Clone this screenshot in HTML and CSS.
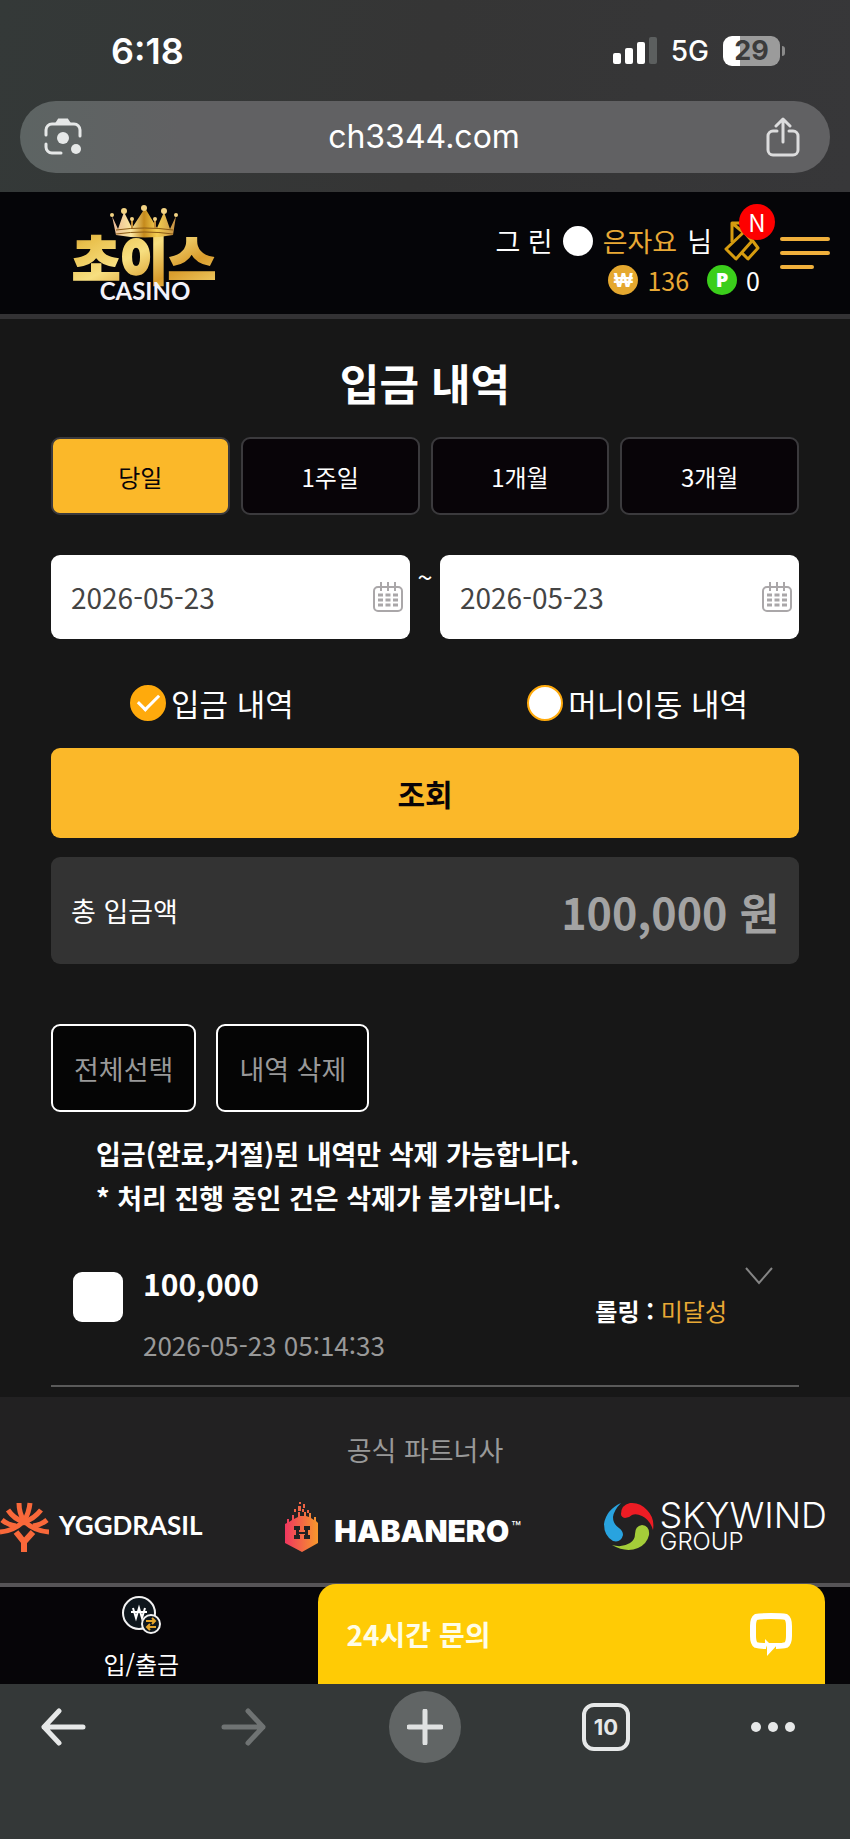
FILE: index.html
```html
<!DOCTYPE html>
<html lang="ko">
<head>
    <meta charset="UTF-8">
    <meta name="viewport" content="width=device-width, initial-scale=1.0">
    <title>입금 내역</title>
    <link rel="stylesheet" href="styles.css">
</head>
<body>
    <div class="browser-top">
        <div class="status-bar">
            <span class="time">6:18</span>
            <div class="status-icons">
                <svg class="signal" width="44" height="28" viewBox="0 0 44 28">
                    <rect x="0" y="16" width="8" height="11" rx="2" fill="#fff"/>
                    <rect x="12" y="11" width="8" height="16" rx="2" fill="#fff"/>
                    <rect x="24" y="5" width="8" height="22" rx="2" fill="#fff"/>
                    <rect x="36" y="0" width="8" height="27" rx="2" fill="#5c5f5f"/>
                </svg>
                <span class="network">5G</span>
                <div class="battery"><span class="battery-body">29</span><span class="battery-tip"></span></div>
            </div>
        </div>
        <div class="url-bar">
            <button class="icon-btn" aria-label="Lens">
                <svg width="38" height="38" viewBox="0 0 38 38" fill="none" stroke="#e6e8e8" stroke-width="3" stroke-linecap="round">
                    <path d="M2 17v-5a6 6 0 0 1 6-6h22a6 6 0 0 1 6 6v6M2 26v3a6 6 0 0 0 6 6h9"/>
                    <path d="M13 5l2-3h8l2 3z" fill="#e6e8e8"/>
                    <circle cx="19" cy="20" r="6" fill="#e6e8e8" stroke="none"/>
                    <circle cx="32" cy="31" r="5" fill="#e6e8e8" stroke="none"/>
                </svg>
            </button>
            <span class="url">ch3344.com</span>
            <button class="icon-btn" aria-label="Share">
                <svg width="34" height="40" viewBox="0 0 34 40" fill="none" stroke="#dcdcdd" stroke-width="3" stroke-linecap="round" stroke-linejoin="round">
                    <path d="M11 14H7a5 5 0 0 0-5 5v14a5 5 0 0 0 5 5h20a5 5 0 0 0 5-5V19a5 5 0 0 0-5-5h-4"/>
                    <path d="M17 25V3M10 9l7-7 7 7"/>
                </svg>
            </button>
        </div>
    </div>

    <header class="site-header">
        <a href="#" class="logo">
            <svg width="148" height="108" viewBox="0 -4 148 108">
                <defs>
                    <linearGradient id="gold" x1="0" y1="0" x2="1" y2="1">
                        <stop offset="0" stop-color="#b8802a"/>
                        <stop offset=".2" stop-color="#e9c04c"/>
                        <stop offset=".45" stop-color="#f7df80"/>
                        <stop offset=".7" stop-color="#d99c2c"/>
                        <stop offset="1" stop-color="#f6d873"/>
                    </linearGradient>
                    <linearGradient id="crown" x1="0" y1="0" x2="1" y2="0">
                        <stop offset="0" stop-color="#e8b795"/>
                        <stop offset=".3" stop-color="#fbe6a0"/>
                        <stop offset=".5" stop-color="#c58a1c"/>
                        <stop offset=".7" stop-color="#f5cf50"/>
                        <stop offset="1" stop-color="#c58f45"/>
                    </linearGradient>
                </defs>
                <text class="logo-name" x="73" y="77" text-anchor="middle" fill="url(#gold)" stroke="url(#gold)" stroke-width="2">초이스</text>
                <path fill="url(#crown)" d="M41 13L47 26 53 9 61 25 74 5 86 25 93 9 99 26 105 13 102 32Q74 37 45 32z"/>
                <path fill="none" stroke="#8a5a14" stroke-width="1" d="M45 27Q74 23 102 27M45 31Q74 27 102 31"/>
                <path fill="none" stroke="#c08a35" stroke-width="2" d="M61 17v8M84 17v8"/>
                <g fill="#f3d384">
                    <circle cx="41" cy="12" r="2"/>
                    <circle cx="53" cy="8" r="3"/>
                    <circle cx="73" cy="5" r="3"/>
                    <circle cx="93" cy="8" r="3"/>
                    <circle cx="105" cy="12" r="2"/>
                    <circle cx="61" cy="16" r="2"/>
                    <circle cx="84" cy="16" r="2"/>
                </g>
                <text class="logo-sub" x="74" y="97" text-anchor="middle" fill="#f2f2fa">CASINO</text>
            </svg>
        </a>
        <div class="user">
            <div class="user-row">
                <span>그 린</span><span class="level-dot"></span><span class="gold">은자요</span><span>님</span>
                <a href="#" class="message" aria-label="쪽지">
                    <svg width="36" height="42" viewBox="0 0 36 42" fill="none" stroke="#d69c10" stroke-width="3" stroke-linejoin="round">
                        <path d="M8 22V3h9l12 16M8 3l12 10"/>
                        <path d="M2 29l18-17 8 9-16 18z"/>
                        <path d="M28 20l6 8-10 11-6-6"/>
                    </svg>
                    <span class="badge">N</span>
                </a>
            </div>
            <div class="money-row">
                <span class="coin coin-won">₩</span><span class="money gold">136</span>
                <span class="coin coin-point">P</span><span class="money">0</span>
            </div>
        </div>
        <button class="menu-btn" aria-label="메뉴"><span></span><span></span><span></span></button>
    </header>

    <main class="content">
        <h1>입금 내역</h1>

        <div class="tabs">
            <button class="tab active">당일</button>
            <button class="tab">1주일</button>
            <button class="tab">1개월</button>
            <button class="tab">3개월</button>
        </div>

        <div class="dates">
            <label class="date-box">
                <input type="text" value="2026-05-23" aria-label="시작일">
                <svg width="30" height="30" viewBox="0 0 30 30" fill="none" stroke="#aaa7a9" stroke-width="2">
                    <rect x="1" y="5" width="28" height="24" rx="4"/>
                    <path d="M8 0v9M15 0v9M22 0v9"/>
                    <path d="M5 13h20M5 18h20M5 23h20" stroke-width="3" stroke-dasharray="5 2.5"/>
                </svg>
            </label>
            <span class="tilde">~</span>
            <label class="date-box">
                <input type="text" value="2026-05-23" aria-label="종료일">
                <svg width="30" height="30" viewBox="0 0 30 30" fill="none" stroke="#aaa7a9" stroke-width="2">
                    <rect x="1" y="5" width="28" height="24" rx="4"/>
                    <path d="M8 0v9M15 0v9M22 0v9"/>
                    <path d="M5 13h20M5 18h20M5 23h20" stroke-width="3" stroke-dasharray="5 2.5"/>
                </svg>
            </label>
        </div>

        <div class="types">
            <label class="type"><input type="radio" name="type" checked>입금 내역</label>
            <label class="type"><input type="radio" name="type">머니이동 내역</label>
        </div>

        <button class="search-btn">조회</button>

        <div class="total">
            <span class="total-label">총 입금액</span>
            <strong class="total-amount">100,000 원</strong>
        </div>

        <div class="actions">
            <button class="action">전체선택</button>
            <button class="action">내역 삭제</button>
        </div>

        <p class="notice">입금(완료,거절)된 내역만 삭제 가능합니다.<br>* 처리 진행 중인 건은 삭제가 불가합니다.</p>

        <div class="record">
            <input type="checkbox" id="record-1" class="record-check">
            <label for="record-1" class="record-info">
                <strong class="record-amount">100,000</strong>
                <span class="record-date">2026-05-23 05:14:33</span>
            </label>
            <div class="rolling"><strong>롤링 :</strong> <span class="gold">미달성</span></div>
            <svg class="chevron" width="28" height="18" viewBox="0 0 28 18" fill="none" stroke="#858585" stroke-width="2">
                <path d="M1 1l13 15L27 1"/>
            </svg>
        </div>
    </main>

    <footer class="partners">
        <h2>공식 파트너사</h2>
        <div class="partner-list">
            <div class="partner yggdrasil">
                <svg width="49" height="50" viewBox="0 0 49 50" fill="none" stroke="#f9683a" stroke-width="5">
                    <path d="M24 50V40L16 30M24 40l9-10" stroke-width="6"/>
                    <path d="M0 30q14-1 24-11 10 10 25 11"/>
                    <path d="M2 18q6 5 14 6M47 18q-6 5-14 6"/>
                    <path d="M8 8q6 9 16 12 10-3 17-12"/>
                    <path d="M19 1q0 10 5 18 5-8 6-18"/>
                </svg>
                <span>YGGDRASIL</span>
            </div>
            <div class="partner habanero">
                <svg width="33" height="50" viewBox="0 0 33 50">
                    <defs>
                        <linearGradient id="fire" x1="0" y1="0" x2="1" y2="0">
                            <stop offset="0" stop-color="#f0365f"/>
                            <stop offset="1" stop-color="#f7982c"/>
                        </linearGradient>
                    </defs>
                    <path fill="url(#fire)" d="M0 22l2-1v-4h2v3l3-2v-5h2v4l4-2v-5h2v4h4v-4h2v4l3 1v-4h2v5l3 2v-3h2v4l2 2v20l-16 9L0 41z"/>
                    <path fill="#ee6444" d="M13 4h3v5h-3zM14 0h2v2h-2zM18 2h2v4h-2zM17 7h2v3h-2zM22 8h2v3h-2zM9 7h2v3H9z"/>
                    <path fill="#222" d="M9 24h6v4h-1v2h6v-2h-1v-4h6v4h-2v5h2v4h-6v-4h1v-1h-6v1h1v4H9v-4h2v-5H9z"/>
                </svg>
                <span>HABANERO</span><sup>™</sup>
            </div>
            <div class="partner skywind">
                <svg width="50" height="50" viewBox="0 0 50 50">
                    <path fill="#29a3df" d="M17 1Q2 8 0 22q0 12 9 17 8 2 10-6 0-4-4-7-6-4-6-11 1-7 8-14z"/>
                    <path fill="#ed1c24" d="M17 12q0-9 9-11 10-1 17 7 8 8 6 20-3-10-11-14-6-3-10-1-3 3-7 3-4-1-4-4z"/>
                    <path fill="#a4cd39" d="M38 23q8 1 7 10-2 9-11 13-12 5-26-3 10 3 18-2 5-3 5-9 0-8 7-9z"/>
                </svg>
                <div class="skywind-name"><span>SKYWIND</span><small>GROUP</small></div>
            </div>
        </div>
    </footer>

    <nav class="bottom-bar">
        <a href="#" class="bank-link">
            <svg width="40" height="40" viewBox="0 0 40 40" fill="none">
                <circle cx="18" cy="18" r="16" fill="#0e161c" stroke="#f2f2f2" stroke-width="2"/>
                <path d="M12 13l3 10 3-10 3 10 3-10M10 17h16" stroke="#fff" stroke-width="2"/>
                <circle cx="30" cy="29" r="9" fill="#0e161c" stroke="#f2f2f2" stroke-width="2"/>
                <path d="M25 26h9M31 23l3 3-3 3M35 32h-9M29 29l-3 3 3 3" stroke="#e5a52c" stroke-width="2"/>
            </svg>
            <span>입/출금</span>
        </a>
        <button class="chat">
            <span>24시간 문의</span>
            <svg width="44" height="44" viewBox="0 0 44 44" fill="none" stroke="#fff" stroke-width="6" stroke-linejoin="round">
                <path d="M17 34q-7 0-10-1-3-2-3-9V14q0-7 3-9 4-1 15-1t15 1q3 2 3 9v10q0 7-3 9-3 1-10 1"/>
                <path d="M16 31v-4l4 4h10L18 44v-8z" fill="#fff" stroke="none"/>
            </svg>
        </button>
    </nav>

    <div class="browser-bottom">
        <button class="icon-btn" aria-label="Back">
            <svg width="46" height="38" viewBox="0 0 46 38" fill="none" stroke="#e6e8e8" stroke-width="5" stroke-linecap="round" stroke-linejoin="round">
                <path d="M43 19H4M19 3L4 19l15 16"/>
            </svg>
        </button>
        <button class="icon-btn" aria-label="Forward">
            <svg width="46" height="38" viewBox="0 0 46 38" fill="none" stroke="#6f7373" stroke-width="5" stroke-linecap="round" stroke-linejoin="round">
                <path d="M3 19h39M27 3l15 16-15 16"/>
            </svg>
        </button>
        <button class="icon-btn new-tab" aria-label="New tab">
            <svg width="36" height="36" viewBox="0 0 36 36" fill="none" stroke="#dfe1e1" stroke-width="5" stroke-linecap="round">
                <path d="M18 2v32M2 18h32"/>
            </svg>
        </button>
        <button class="icon-btn"><span class="tab-count">10</span></button>
        <button class="icon-btn more" aria-label="More">
            <svg width="46" height="12" viewBox="0 0 46 12" fill="#e6e8e8">
                <circle cx="5" cy="6" r="5"/>
                <circle cx="22" cy="6" r="5"/>
                <circle cx="39" cy="6" r="5"/>
            </svg>
        </button>
    </div>
</body>
</html>
```
FILE: styles.css
```css
* {
    margin: 0;
    padding: 0;
    box-sizing: border-box;
}

body {
    background-color: #171717;
    color: #fff;
    font-family: 'Noto Sans CJK KR', 'Noto Sans', sans-serif;
    font-size: 27px;
}

svg {
    display: block;
    flex-shrink: 0;
}

button,
input {
    font-family: inherit;
    font-size: inherit;
    border: none;
}

button {
    cursor: pointer;
}

a {
    color: inherit;
    text-decoration: none;
}

.gold {
    color: #e9a935;
}

.icon-btn {
    display: flex;
    align-items: center;
    justify-content: center;
    background: none;
}

/* Browser top */
.browser-top {
    height: 192px;
    padding: 0 20px;
    background: linear-gradient(100deg, #343938, #353535 50%, #373739);
    font-family: Inter, sans-serif;
}

.status-bar {
    display: flex;
    justify-content: space-between;
    align-items: center;
    height: 101px;
    padding: 0 45px 0 91px;
}

.time {
    font-size: 36px;
    font-weight: 600;
}

.status-icons {
    display: flex;
    align-items: center;
    gap: 14px;
}

.network {
    font-size: 28px;
    font-weight: 500;
}

.battery {
    display: flex;
    align-items: center;
    gap: 2px;
}

.battery-body {
    width: 57px;
    border-radius: 9px;
    background: linear-gradient(90deg, #fff 29%, #9b9b9b 29%);
    color: #3b3b3b;
    font-weight: 700;
    line-height: 30px;
    text-align: center;
}

.battery-tip {
    width: 3px;
    height: 10px;
    border-radius: 0 3px 3px 0;
    background-color: #8a8a8a;
}

.url-bar {
    display: flex;
    align-items: center;
    justify-content: space-between;
    height: 72px;
    padding: 0 30px 0 24px;
    border-radius: 36px;
    background: linear-gradient(90deg, #5d6463, #616163 20%, #616163);
}

.url {
    font-size: 32px;
    line-height: 36px;
}

/* Header */
.site-header {
    display: flex;
    align-items: center;
    justify-content: space-between;
    height: 127px;
    padding: 0 20px 0 71px;
    background-color: #050508;
    border-bottom: 5px solid #333234;
}

.logo-name {
    font-size: 52px;
    font-weight: 900;
}

.logo-sub {
    font-family: Lato, sans-serif;
    font-size: 24px;
    font-weight: 700;
}

.user {
    margin: 12px 20px 0 auto;
    line-height: 40px;
}

.user-row,
.money-row {
    display: flex;
    align-items: center;
    justify-content: flex-end;
}

.user-row {
    gap: 10px;
    font-size: 27px;
}

.level-dot {
    width: 30px;
    height: 30px;
    border-radius: 50%;
    background-color: #fff;
}

.money-row {
    height: 36px;
    font-size: 25px;
}

.coin {
    width: 30px;
    border-radius: 50%;
    font-family: 'Open Sans', sans-serif;
    font-size: 20px;
    font-weight: 800;
    line-height: 30px;
    text-align: center;
}

.coin-won {
    background-color: #e5a82f;
}

.coin-point {
    margin-left: 18px;
    background-color: #3bce1b;
}

.money {
    margin-left: 9px;
}

.message {
    position: relative;
    margin-left: 2px;
}

.badge {
    position: absolute;
    top: -16px;
    left: 15px;
    width: 36px;
    border-radius: 50%;
    background-color: #fe0000;
    font-size: 24px;
    line-height: 36px;
    text-align: center;
}

.menu-btn {
    display: flex;
    flex-direction: column;
    gap: 10px;
    width: 50px;
    background: none;
}

.menu-btn span {
    width: 100%;
    height: 4px;
    border-radius: 2px;
    background-color: #f0b03c;
}

.menu-btn span:last-child {
    width: 34px;
}

/* Content */
.content {
    padding: 31px 51px 10px;
}

h1 {
    margin-bottom: 23px;
    font-size: 43px;
    line-height: 64px;
    text-align: center;
}

.tabs {
    display: grid;
    grid-template-columns: repeat(4, 1fr);
    gap: 11px;
    margin-bottom: 40px;
}

.tab {
    height: 78px;
    border: 2px solid #3b3a3d;
    border-radius: 9px;
    background-color: #080408;
    color: #fff;
    font-size: 24px;
}

.tab.active {
    background-color: #fbb829;
    color: #080408;
}

.dates {
    display: flex;
    margin-bottom: 40px;
}

.date-box {
    display: flex;
    align-items: center;
    flex: 1;
    min-width: 0;
    height: 84px;
    padding: 0 7px 0 20px;
    border-radius: 9px;
    background-color: #fff;
}

.date-box input {
    flex: 1;
    min-width: 0;
    background: none;
    color: #444;
    font-size: 28px;
    outline: none;
}

.tilde {
    width: 30px;
    line-height: 44px;
    text-align: center;
}

.types {
    display: flex;
    justify-content: space-between;
    padding: 0 51px 0 79px;
    margin-bottom: 21px;
}

.type {
    display: flex;
    align-items: center;
    gap: 5px;
    font-size: 31px;
    line-height: 48px;
}

.type input {
    appearance: none;
    display: flex;
    align-items: center;
    justify-content: center;
    width: 36px;
    height: 36px;
    border: 2px solid #ffaa0c;
    border-radius: 50%;
    background-color: #fff;
}

.type input:checked {
    background-color: #ffaa0c;
}

.type input:checked::before {
    content: '';
    width: 18px;
    height: 9px;
    margin-bottom: 6px;
    border-left: 3px solid #fff;
    border-bottom: 3px solid #fff;
    transform: rotate(-45deg);
}

.search-btn {
    width: 100%;
    height: 90px;
    margin-bottom: 19px;
    border-radius: 9px;
    background-color: #fbb829;
    color: #080408;
    font-size: 30px;
    font-weight: 700;
}

.total {
    display: flex;
    align-items: center;
    justify-content: space-between;
    height: 107px;
    margin-bottom: 60px;
    padding: 0 20px;
    border-radius: 9px;
    background-color: #333;
}

.total-amount {
    color: #a3a3a3;
    font-size: 43px;
}

.actions {
    display: flex;
    gap: 20px;
    margin-bottom: 20px;
}

.action {
    height: 88px;
    padding: 0 21px;
    border: 2px solid #fff;
    border-radius: 9px;
    background-color: #050505;
    color: #999;
}

.notice {
    margin-bottom: 44px;
    padding-left: 45px;
    font-weight: 700;
    line-height: 44px;
}

.record {
    display: flex;
    align-items: flex-start;
    padding: 0 26px 21px 22px;
    border-bottom: 2px solid #5a5a5a;
}

.record-check {
    appearance: none;
    width: 50px;
    height: 50px;
    margin-top: 8px;
    border-radius: 9px;
    background-color: #fff;
}

.record-info {
    display: flex;
    flex-direction: column;
    gap: 24px;
    margin-left: 20px;
    line-height: 38px;
}

.record-amount {
    font-size: 30px;
}

.record-date {
    color: #999;
    font-size: 26px;
}

.rolling {
    margin: 32px 18px 0 auto;
    font-size: 24px;
    line-height: 30px;
}

.chevron {
    margin-top: 3px;
}

/* Partners */
.partners {
    padding: 33px 0 31px;
    background-color: #222122;
    border-bottom: 4px solid #565457;
    overflow: hidden;
}

.partners h2 {
    margin-bottom: 32px;
    color: #999;
    font-size: 27px;
    font-weight: 400;
    line-height: 40px;
    text-align: center;
}

.partner-list {
    display: flex;
    justify-content: space-between;
    padding-right: 23px;
}

.partner {
    display: flex;
    align-items: center;
    height: 50px;
    white-space: nowrap;
}

.yggdrasil {
    gap: 10px;
    font-family: Lato, sans-serif;
    font-size: 26px;
    font-weight: 700;
    line-height: 46px;
    align-items: flex-start;
}

.habanero {
    font-family: Inter, sans-serif;
    font-size: 30px;
    font-weight: 900;
}

.habanero span {
    margin: 8px 2px 0 16px;
}

.habanero sup {
    font-size: 16px;
    font-weight: 400;
}

.skywind {
    gap: 6px;
    font-family: Inter, sans-serif;
}

.skywind-name {
    display: flex;
    flex-direction: column;
    font-size: 36px;
    font-weight: 300;
    line-height: 30px;
}

.skywind-name small {
    font-size: 24px;
    line-height: 24px;
}

/* Bottom bar */
.bottom-bar {
    display: flex;
    height: 97px;
    background-color: #060508;
}

.bank-link {
    display: flex;
    flex-direction: column;
    align-items: center;
    width: 33%;
    padding: 8px 0 0 2px;
    font-size: 24px;
    line-height: 58px;
}

.chat {
    display: flex;
    align-items: center;
    justify-content: space-between;
    flex: 1;
    margin: -3px 25px 0 37px;
    padding: 0 32px 0 29px;
    border-radius: 18px 18px 0 0;
    background-color: #ffcb05;
    color: #fffde6;
    font-size: 28px;
    font-weight: 700;
}

/* Browser bottom */
.browser-bottom {
    display: flex;
    justify-content: space-between;
    align-items: flex-start;
    height: 155px;
    padding: 7px 27px 0;
    background-color: #343838;
}

.browser-bottom .icon-btn {
    width: 72px;
    height: 72px;
}

.browser-bottom .new-tab {
    border-radius: 50%;
    background-color: #616565;
}

.browser-bottom .more {
    justify-content: flex-start;
}

.tab-count {
    width: 48px;
    border: 4px solid #e6e8e8;
    border-radius: 12px;
    color: #e6e8e8;
    font-family: Inter, sans-serif;
    font-size: 22px;
    font-weight: 700;
    line-height: 40px;
}
```
